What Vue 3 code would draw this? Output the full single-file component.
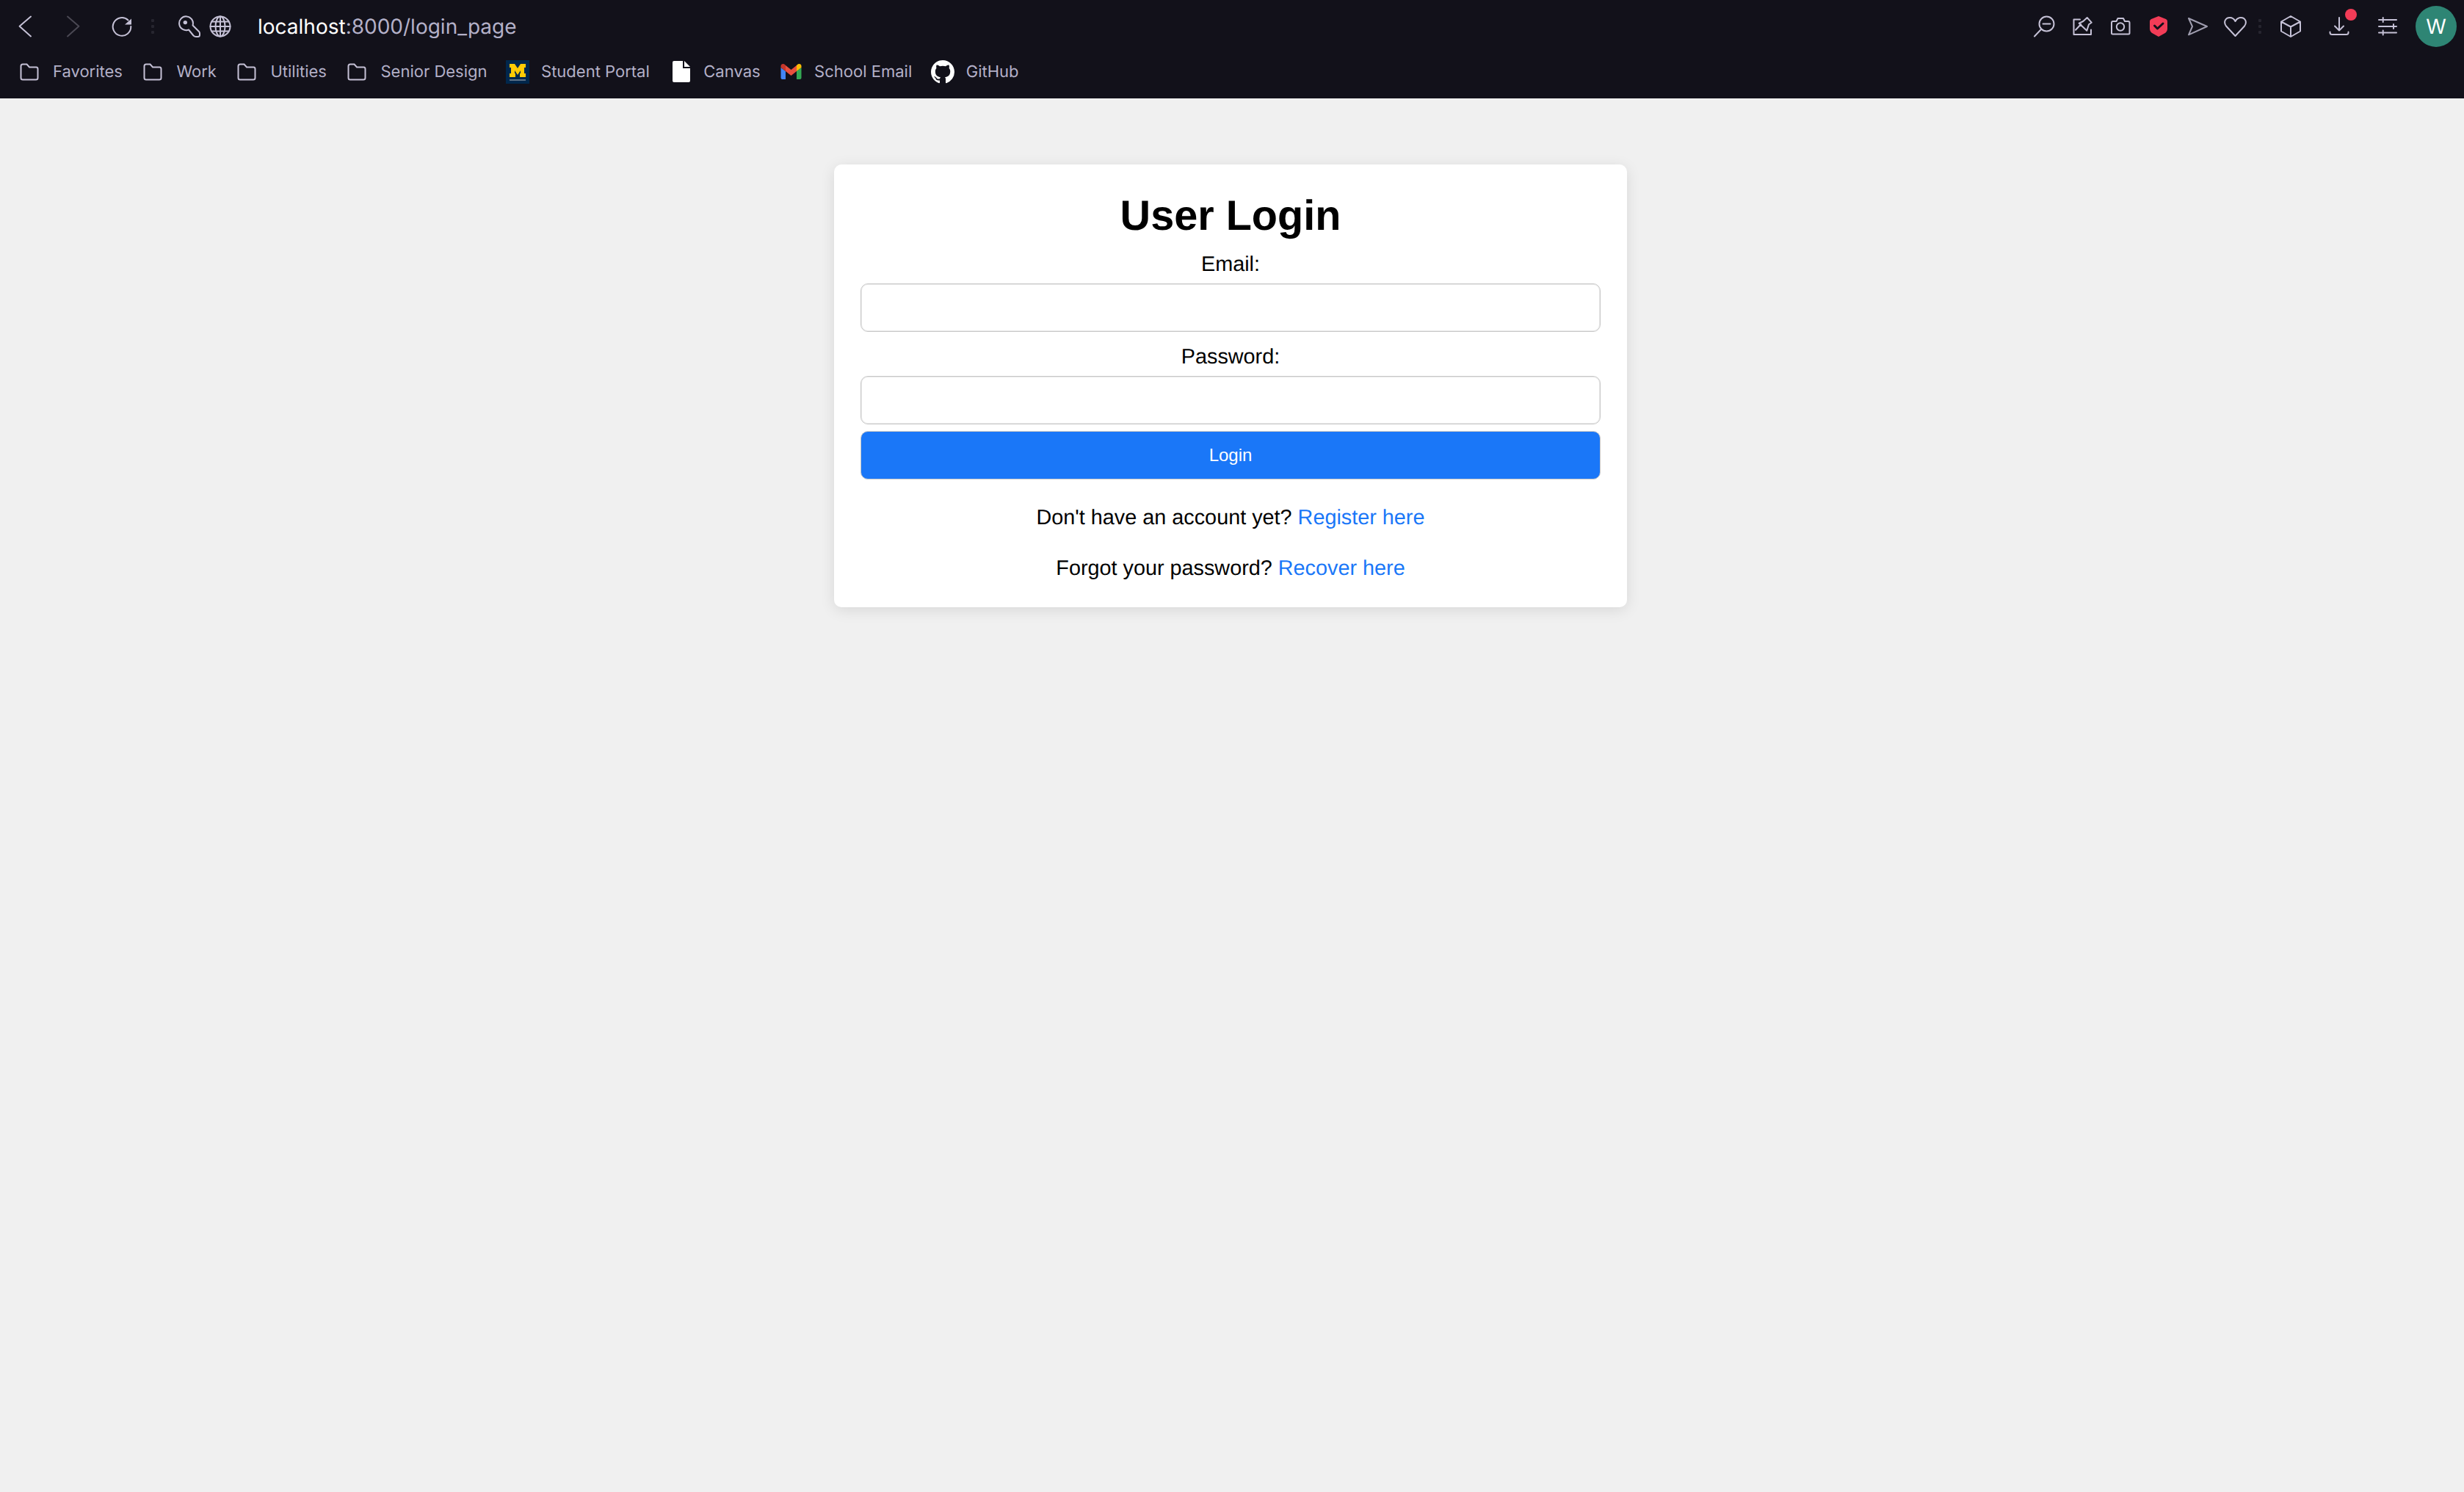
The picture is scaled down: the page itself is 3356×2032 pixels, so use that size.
<script setup>
const folders = ['Favorites', 'Work', 'Utilities', 'Senior Design']
</script>

<template>
  <div class="page">
    <header class="chrome">
      <div class="toolbar">
        <div class="tools-left">
          <svg class="ic back" viewBox="0 0 32 32"><path d="M24 2.6 8.6 15.8 24 29.4" /></svg>
          <svg class="ic forward dim" viewBox="0 0 32 32"><path d="M8 2.6 23.4 15.8 8 29.4" /></svg>
          <svg class="ic reload" viewBox="0 0 32 32">
            <path d="M24.5 7.5A12.3 12.3 0 1 0 28.3 16" />
            <path class="solid" d="M29 5.500v8H20z" />
          </svg>
          <span class="grip"><i></i><i></i><i></i></span>
          <svg class="ic key" viewBox="0 0 32 32">
            <path d="M20.500 14.500A9.400 9.400 0 1 0 15 20.500L21.500 28.500Q23 30 25 30H27.500Q30 30 30 27.500V25.500Q30 24 29 23Z" />
            <circle class="solid" cx="10.300" cy="10.600" r="2.700" />
          </svg>
          <svg class="ic globe" viewBox="0 0 32 32">
            <circle cx="16" cy="16" r="13.5" />
            <ellipse cx="16" cy="16" rx="6.5" ry="13.5" />
            <path d="M16 2.500V29.500M2.500 16H29.500M4.500 9.500H27.500M4.500 22.500H27.500" />
          </svg>
          <div class="url"><span class="host">localhost</span>:8000/login_page</div>
        </div>
        <div class="tools-right">
          <svg class="ic" viewBox="0 0 32 32">
            <circle cx="19.500" cy="12.500" r="10" />
            <path d="M12 20 3 29.500M14.500 12.500H24.500" />
          </svg>
          <svg class="ic" viewBox="0 0 32 32">
            <path d="M13 6.500H4.500V27H28V20.500" />
            <path d="M22.700 4 28.700 10.700 25 13.300 22.300 21.700 11.700 11.700 17.300 9ZM7 20.700 14.300 13" />
          </svg>
          <svg class="ic" viewBox="0 0 32 32">
            <path d="M6 9H10.500L12.500 5H20L22 9H26.500Q28.500 9 28.500 11V25Q28.500 26.500 27 26.500H5.500Q4 26.500 4 25V11Q4 9 6 9Z" />
            <circle cx="16" cy="16.500" r="5.200" />
          </svg>
          <svg class="ic" viewBox="0 0 32 32">
            <path class="shield" d="M16 2 26 6Q28 7 28 9V19Q28 23 24 25.500L16 30 8 25.500Q4 23 4 19V9Q4 7 6 6Z" />
            <path class="tick" d="M10.500 15 14.500 19 22 12" />
          </svg>
          <svg class="ic send" viewBox="0 0 32 32"><path d="M3 5 28 16 3 27.300 8 16Z" /></svg>
          <svg class="ic heart" viewBox="0 0 32 32">
            <path d="M16.500 29 4 15.500C0 10 3 4 9 4 12.500 4 15 6 16.500 9 18 6 20.500 4 24 4 30 4 33 10 29 15.500Z" />
          </svg>
          <span class="grip grip-r"><i></i><i></i><i></i></span>
          <svg class="ic cube" viewBox="0 0 32 32">
            <path d="M16 2 29 9.500V22.500L16 30 3 22.500V9.500ZM3 9.500 16 16.500 29 9.500M16 16.500V30" />
          </svg>
          <span class="download">
            <svg class="ic" viewBox="0 0 32 32">
              <path d="M16 4V21.500M10 15.500 16 21.500 22 15.500M3.500 23.500V24.500Q3.500 27 6.500 27H25.500Q28.500 27 28.500 24.500V23.500" />
            </svg>
            <span class="badge"></span>
          </span>
          <svg class="ic sliders" viewBox="0 0 32 32">
            <path d="M4 7H28M4 16H28M4 24.500H28M9.700 4V10M24 13V19M9.700 21.500V27.500" />
          </svg>
          <div class="avatar">W</div>
        </div>
      </div>

      <nav class="bookmarks">
        <a v-for="name in folders" :key="name" class="bm">
          <svg class="bm-ic ic-folder" viewBox="0 0 32 32">
            <path d="M4.500 8Q4.500 5.500 7 5.500H12.500L16 9.500H25.500Q27.500 9.500 27.500 12V24Q27.500 26.500 25 26.500H7Q4.500 26.500 4.500 24Z" />
          </svg>
          <span>{{ name }}</span>
        </a>
        <a class="bm">
          <svg class="bm-ic" viewBox="0 0 32 32">
            <rect width="32" height="32" fill="#00274c" />
            <path fill="#ffcb05" d="M5 5H12L16 11 20 5H27V10H25V18H27V23H19V18H20V14L16 20 12 14V18H13V23H5V18H7V10H5Z" />
            <rect x="5" y="26" width="22" height="2" fill="#5d7287" />
          </svg>
          <span>Student Portal</span>
        </a>
        <a class="bm">
          <svg class="bm-ic" viewBox="0 0 32 32">
            <path fill="#fff" d="M6 3Q6 1 8 1H20V11H30V28Q30 30 28 30H8Q6 30 6 28Z" />
            <path fill="#fff" d="M22 1 30 9H22Z" />
          </svg>
          <span>Canvas</span>
        </a>
        <a class="bm">
          <svg class="bm-ic" viewBox="0 0 32 32">
            <path fill="#4285f4" d="M2.500 10V24Q2.500 26 4.500 26H9V15Z" />
            <path fill="#c5372c" d="M2.500 10V8C2.500 5 6 4 8 6L9 7V15Z" />
            <path fill="#ea4f3d" d="M9 7 16.500 13 24 7V15L16.500 21 9 15Z" />
            <path fill="#34a853" d="M24 15V26H28.500Q30.500 26 30.500 24V10Z" />
            <path fill="#fbbc04" d="M24 7 25 6C27 4 30.500 5 30.500 8V10L24 15Z" />
          </svg>
          <span>School Email</span>
        </a>
        <a class="bm">
          <svg class="bm-ic" viewBox="0 0 16 16">
            <path fill="#fff" d="M8 0C3.580 0 0 3.580 0 8c0 3.540 2.290 6.530 5.470 7.590.4.070.55-.17.55-.38 0-.19-.01-.82-.01-1.490-2.010.37-2.530-.49-2.690-.94-.09-.23-.48-.94-.82-1.130-.28-.15-.68-.52-.01-.53.63-.01 1.080.58 1.230.82.72 1.210 1.870.87 2.330.66.07-.52.28-.87.51-1.070-1.780-.2-3.640-.89-3.640-3.950 0-.87.31-1.590.82-2.150-.08-.2-.36-1.020.08-2.120 0 0 .67-.21 2.200.82.64-.18 1.320-.27 2-.27.68 0 1.360.09 2 .27 1.530-1.040 2.200-.82 2.200-.82.44 1.100.16 1.920.08 2.120.51.56.82 1.270.82 2.150 0 3.070-1.870 3.750-3.650 3.950.29.25.54.73.54 1.480 0 1.070-.01 1.930-.01 2.200 0 .21.15.46.55.38A8.013 8.013 0 0016 8c0-4.420-3.580-8-8-8z" />
          </svg>
          <span>GitHub</span>
        </a>
      </nav>
    </header>

    <main class="content">
      <section class="card">
        <h1>User Login</h1>
        <form class="form" @submit.prevent>
          <label for="email">Email:</label>
          <input id="email" type="email" />
          <label for="password">Password:</label>
          <input id="password" type="password" />
          <button type="submit">Login</button>
        </form>
        <p class="hint first">Don't have an account yet? <a>Register here</a></p>
        <p class="hint">Forgot your password? <a>Recover here</a></p>
      </section>
    </main>
  </div>
</template>

<style>
html, body { margin: 0; background: #f0f0f0; }
</style>

<style scoped>
.page {
  min-height: 2032px;
  background: #f0f0f0;
  font-family: "Liberation Sans", Arial, sans-serif;
  text-rendering: geometricPrecision;
}
.chrome {
  height: 134px;
  background: #12111a;
  font-family: Inter, "Noto Sans", sans-serif;
  color: #b3b0c8;
  overflow: hidden;
}
.toolbar {
  height: 72px;
  display: flex;
  align-items: center;
  justify-content: space-between;
  padding: 0 10px 0 18px;
}
.tools-left, .tools-right { display: flex; align-items: center; }
.ic {
  width: 32px;
  height: 32px;
  display: block;
  flex: none;
  fill: none;
  stroke: #c5c1d6;
  stroke-width: 2;
  stroke-linecap: round;
  stroke-linejoin: round;
  overflow: visible;
}
.ic .solid { fill: #c5c1d6; stroke: none; }
.dim { stroke: #4a4853; }
.forward { margin-left: 34px; }
.reload { margin-left: 34px; }
.grip { display: flex; flex-direction: column; gap: 4px; width: 8px; align-items: center; margin-left: 22px; }
.grip i { width: 4px; height: 4px; border-radius: 1px; background: #26252f; }
.key { margin-left: 30px; }
.globe { margin-left: 10px; }
.url {
  margin-left: 35px;
  font-size: 28px;
  line-height: 32px;
  color: #b3b0c8;
  white-space: nowrap;
}
.host { color: #fff; }
.tools-right { gap: 20px; }
.tools-right .grip { margin: 0 2px 0 -6px; }
.shield { fill: #f23c57; stroke: none; }
.tick { stroke: #12111a; stroke-width: 3; }
.send { stroke: #a09eb0; margin-left: 2px; }
.heart { margin-left: -2px; }
.download { position: relative; display: block; margin-left: 14px; }
.badge {
  position: absolute;
  left: 24px;
  top: -8px;
  width: 16px;
  height: 16px;
  border-radius: 50%;
  background: #f23c57;
}
.sliders { margin-left: 14px; }
.avatar {
  width: 56px;
  height: 56px;
  border-radius: 50%;
  background: #2e8574;
  color: #fff;
  font-size: 28px;
  line-height: 56px;
  text-align: center;
  margin-left: 2px;
}
.bookmarks {
  height: 52px;
  display: flex;
  align-items: center;
  gap: 25.5px;
  padding: 0 0 0 24px;
  font-size: 22px;
  line-height: 32px;
}
.bm { display: flex; align-items: center; gap: 16px; white-space: nowrap; }
.bm-ic { width: 32px; height: 32px; display: block; flex: none; }
.ic-folder { fill: none; stroke: #c5c1d6; stroke-width: 2; }

.content { display: flex; justify-content: center; padding: 90px 4px 0 0; }
.card {
  width: 1080px;
  box-sizing: border-box;
  background: #fff;
  border-radius: 10px;
  padding: 38px 36px 37px;
  box-shadow: 0 4px 20px rgba(0, 0, 0, 0.1);
  text-align: center;
  color: #000;
}
h1 {
  margin: 0;
  font-size: 57.6px;
  line-height: 64px;
  font-weight: 700;
}
.form { display: flex; flex-direction: column; margin-top: 18px; }
label { font-size: 28.8px; line-height: 32px; display: block; }
input {
  height: 66px;
  box-sizing: border-box;
  margin: 10px 0 18px;
  padding: 0 16px;
  border: 1px solid #c8c8c8;
  box-shadow: inset 0 0 0 1px #e8e8e8;
  border-radius: 10px;
  background: #fff;
  outline: none;
}
#password { margin-bottom: 9px; }
button {
  height: 66px;
  border: 1px solid #c8c8c8;
  border-radius: 10px;
  background: #1a77f8;
  color: #fff;
  font-family: inherit;
  font-size: 24px;
  padding: 0;
}
.hint { margin: 37px 0 0; font-size: 28.8px; line-height: 32px; }
.hint.first { margin-top: 36px; }
.hint a { color: #1a77f8; }
</style>
